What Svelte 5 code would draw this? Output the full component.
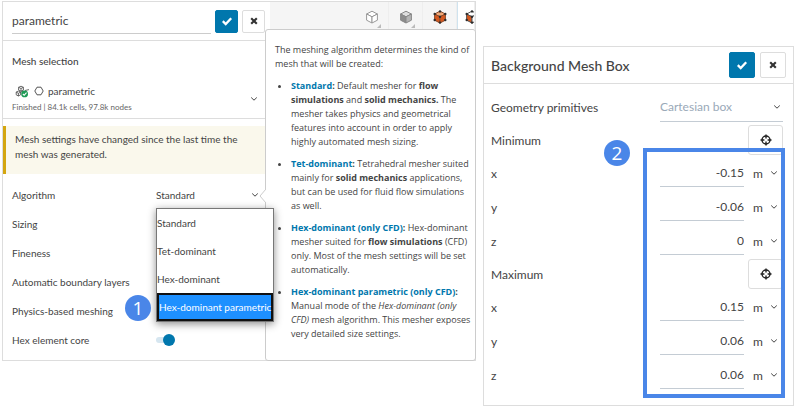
<script lang="ts">
  let meshName = $state('parametric');
  let algorithm = $state('Hex-dominant parametric');
  let hexCore = $state(true);

  const algorithms = ['Standard', 'Tet-dominant', 'Hex-dominant', 'Hex-dominant parametric'];
  const settings = ['Sizing', 'Fineness', 'Automatic boundary layers', 'Physics-based meshing'];

  let corners = $state([
    { name: 'Minimum', axes: [{ axis: 'x', value: '-0.15' }, { axis: 'y', value: '-0.06' }, { axis: 'z', value: '0' }] },
    { name: 'Maximum', axes: [{ axis: 'x', value: '0.15' }, { axis: 'y', value: '0.06' }, { axis: 'z', value: '0.06' }] }
  ]);
</script>

{#snippet check()}
  <svg viewBox="0 0 12 12" width="12" height="12"><path d="M1.8 6.2 4.7 9 10.2 3.3" fill="none" stroke="#fff" stroke-width="2.3" /></svg>
{/snippet}

{#snippet cross()}
  <svg viewBox="0 0 12 12" width="12" height="12"><path d="M3.2 3.2 8.8 8.8M8.8 3.2 3.2 8.8" fill="none" stroke="#333" stroke-width="2.1" /></svg>
{/snippet}

{#snippet chevron()}
  <svg class="chevron" viewBox="0 0 8 6" width="8" height="6"><path d="M1.2 1.5 4 4.2 6.8 1.5" fill="none" stroke="#444" /></svg>
{/snippet}

{#snippet cube(top: string, left: string, right: string, line: string, dots: boolean)}
  <svg viewBox="0 0 14 14" width="14" height="14">
    <path d="M7 1.2 12.4 4 7 6.8 1.6 4Z" fill={top} stroke={line} />
    <path d="M1.6 4 7 6.8V13L1.6 10.2Z" fill={left} stroke={line} />
    <path d="M12.4 4 7 6.8V13l5.4-2.8Z" fill={right} stroke={line} />
    {#if dots}
      {#each [[7, 1.4], [1.7, 4], [12.3, 4], [7, 6.8], [1.7, 10], [12.3, 10], [7, 12.6]] as [cx, cy]}
        <circle {cx} {cy} r="1.2" fill="#2b2b2b" />
      {/each}
    {/if}
  </svg>
{/snippet}

<main>
  <section class="workspace">
    <div class="side">
      <header class="head">
        <input class="name" aria-label="Mesh name" bind:value={meshName} />
        <button class="btn ok" aria-label="Apply">{@render check()}</button>
        <button class="btn" aria-label="Close">{@render cross()}</button>
      </header>

      <div class="selection">
        <h2>Mesh selection</h2>
        <div class="mesh">
          <div>
            <div class="mesh-name">
              <svg viewBox="0 0 15 13" width="15" height="13">
                <g fill="none" stroke="#444" stroke-width="0.8">
                  <path d="M6 1.2 8.4 2.3V5L6 6.2 3.6 5V2.3ZM3.6 2.3 6 3.5 8.4 2.3M6 3.5V6" />
                  <path d="M3.4 6 5.6 7.1V9.8L3.4 11 1.2 9.8V7.1ZM1.2 7.1 3.4 8.3 5.6 7.1M3.4 8.3V11" />
                  <path d="M5.6 7.1 8.5 6M10 5.5 14 4.6" />
                </g>
                <circle cx="9.6" cy="8.9" r="3.4" fill="#1f9a56" />
                <path d="M7.9 9 9.2 10.3 11.5 7.7" fill="none" stroke="#fff" stroke-width="1.1" />
              </svg>
              <svg viewBox="0 0 10 10" width="10" height="10"><path d="M3 1.2H7L9.2 5 7 8.8H3L.8 5Z" fill="none" stroke="#555" /></svg>
              <span>parametric</span>
            </div>
            <small>Finished | 84.1k cells, 97.8k nodes</small>
          </div>
          {@render chevron()}
        </div>
      </div>

      <p class="warning">Mesh settings have changed since the last time the mesh was generated.</p>

      <div class="rows">
        <div class="row">
          <label for="algorithm">Algorithm</label>
          <div class="pick">
            <select id="algorithm"><option>Standard</option></select>
            {@render chevron()}
            <div class="menu" role="listbox" aria-label="Algorithm">
              {#each algorithms as item}
                <button
                  role="option"
                  class:active={item === algorithm}
                  aria-selected={item === algorithm}
                  onclick={() => (algorithm = item)}>{item}</button>
              {/each}
              <span class="badge one">1</span>
            </div>
          </div>
        </div>
        {#each settings as item}
          <div class="row">{item}</div>
        {/each}
        <div class="row">
          <label for="core">Hex element core</label>
          <input id="core" class="toggle" type="checkbox" bind:checked={hexCore} />
        </div>
      </div>
    </div>

    <nav class="tools">
      <button class="tool more" aria-label="Wireframe">{@render cube('#fff', '#fff', '#fff', '#999', false)}</button>
      <button class="tool more" aria-label="Surfaces">{@render cube('#ddd', '#8c8c8c', '#b4b4b4', '#888', false)}</button>
      <button class="tool" aria-label="Surfaces with edges">{@render cube('#f0a878', '#d4581f', '#d4581f', '#8a4a2a', true)}</button>
      <button class="tool current" aria-label="Mesh edges">{@render cube('#fff', '#d4581f', '#fff', '#555', true)}</button>
    </nav>

    <aside class="help">
      <svg class="arrow" viewBox="0 0 7 14" width="7" height="14"><path d="M7 0 1 7 7 14" fill="#fff" stroke="#ccc" /></svg>
      <p>The meshing algorithm determines the kind of mesh that will be created:</p>
      <ul>
        <li><a href="#standard">Standard</a><b>:</b> Default mesher for <b>flow simulations</b> and <b>solid mechanics.</b> The mesher takes physics and geometrical features into account in order to apply highly automated mesh sizing.</li>
        <li><a href="#tet">Tet-dominant</a><b>:</b> Tetrahedral mesher suited mainly for <b>solid mechanics</b> applications, but can be used for fluid flow simulations as well.</li>
        <li><a href="#hex">Hex-dominant (only CFD)</a><b>:</b> Hex-dominant mesher suited for <b>flow simulations</b> (CFD) only. Most of the mesh settings will be set automatically.</li>
        <li><a href="#hex-parametric">Hex-dominant parametric (only CFD)</a><b>:</b> Manual mode of the <i>Hex-dominant (only CFD)</i> mesh algorithm. This mesher exposes very detailed size settings.</li>
      </ul>
    </aside>
  </section>

  <section class="box">
    <header class="box-head">
      <h1>Background Mesh Box</h1>
      <button class="btn ok" aria-label="Apply">{@render check()}</button>
      <button class="btn" aria-label="Close">{@render cross()}</button>
    </header>
    <div class="box-body">
      <div class="line">
        <label for="primitive">Geometry primitives</label>
        <div class="primitive">
          <select id="primitive"><option>Cartesian box</option></select>
          {@render chevron()}
        </div>
      </div>
      {#each corners as corner}
        <div class="line corner">
          <span>{corner.name}</span>
          <button class="target" aria-label="Pick {corner.name}">
            <svg viewBox="0 0 12 12" width="12" height="12">
              <circle cx="6" cy="6" r="4" fill="none" stroke="#222" stroke-width="1.4" />
              <path d="M6 .5V4.4M6 7.6V11.5M.5 6H4.4M7.6 6H11.5" stroke="#222" stroke-width="1.4" />
            </svg>
          </button>
        </div>
        {#each corner.axes as row}
          <div class="line">
            <label for="{corner.name}-{row.axis}">{row.axis}</label>
            <input id="{corner.name}-{row.axis}" bind:value={row.value} />
            <div class="unit">
              <select aria-label="{corner.name} {row.axis} unit"><option>m</option></select>
              {@render chevron()}
            </div>
          </div>
        {/each}
      {/each}
      <div class="marker"><span class="badge two">2</span></div>
    </div>
  </section>
</main>

<style>
  :global(body) {
    background: #fff;
  }
  main {
    display: grid;
    grid-template-columns: 474fr 311fr;
    gap: 7px;
    align-items: start;
    padding: 1px 0 0 2px;
    font-family: Lato, "Liberation Sans", sans-serif;
    font-size: 10px;
    color: #444;
  }
  * {
    box-sizing: border-box;
  }
  h1, h2, p, ul {
    margin: 0;
  }
  button, input, select {
    margin: 0;
    padding: 0;
    border: 0;
    border-radius: 0;
    background: none;
    font: inherit;
    color: inherit;
    appearance: none;
  }
  svg {
    display: block;
    flex: none;
  }

  .workspace {
    position: relative;
    display: grid;
    grid-template-columns: 267px 1fr;
    border: 1px solid #ddd;
  }
  .head {
    display: flex;
    align-items: center;
    gap: 4px;
    height: 39px;
    padding: 0 5px 0 9px;
    border-bottom: 1px solid #ddd;
  }
  .name {
    flex: 1;
    min-width: 0;
    height: 26px;
    border-bottom: 1px solid #ccc;
    font-size: 12px;
  }
  .btn {
    display: grid;
    place-items: center;
    width: 23px;
    height: 23px;
    border: 1px solid #ddd;
    border-radius: 2px;
  }
  .ok {
    border-color: #0077ad;
    background: #0077ad;
  }
  .selection {
    padding: 12px 9px 0;
    height: 78px;
    border-bottom: 1px solid #ddd;
  }
  h2 {
    font-size: 10px;
    line-height: 16px;
    font-weight: 500;
  }
  .mesh {
    display: flex;
    justify-content: space-between;
    align-items: center;
    margin-top: 14px;
    line-height: 16px;
  }
  .mesh-name {
    display: flex;
    align-items: center;
    gap: 4px;
    padding-left: 3px;
  }
  small {
    display: block;
    font-size: 8px;
    color: #666;
  }
  .mesh > .chevron {
    margin-right: 3px;
  }
  .warning {
    margin-top: 7px;
    height: 48px;
    padding: 6px 24px 0 9px;
    border-left: 3px solid #d4a60f;
    background: #faf8ec;
    line-height: 15px;
  }
  .rows {
    padding: 6px 9px;
  }
  .row {
    display: flex;
    align-items: center;
    height: 29px;
  }
  .row label {
    flex: 0 0 144px;
  }
  .pick {
    position: relative;
    display: flex;
    align-items: center;
    flex: 1;
    padding-right: 2px;
  }
  .pick select {
    flex: 1;
  }
  .menu {
    position: absolute;
    z-index: 2;
    top: 19px;
    left: 0;
    width: 118px;
    border: 1px solid #777;
    background: #fff;
    box-shadow: 0 2px 8px rgba(0, 0, 0, 0.45);
  }
  .menu button {
    display: block;
    width: 100%;
    height: 28px;
    text-align: left;
    white-space: nowrap;
  }
  .menu .active {
    border: 2px solid #111;
    background: #1e90ff;
    color: #fff;
  }
  .badge {
    position: absolute;
    width: 26px;
    height: 26px;
    border-radius: 50%;
    background: #4a86e8;
    color: #fff;
    font-family: "Open Sans", sans-serif;
    font-size: 19px;
    line-height: 26px;
    text-align: center;
  }
  .one {
    bottom: 0;
    left: -32px;
  }
  .toggle {
    position: relative;
    width: 18px;
    height: 6px;
    border-radius: 3px;
    background: #d6e6f0;
  }
  .toggle::after {
    content: "";
    position: absolute;
    top: -3px;
    left: 0;
    width: 12px;
    height: 12px;
    border-radius: 50%;
    background: #999;
  }
  .toggle:checked::after {
    left: 7px;
    background: #0077ad;
  }

  .tools {
    display: flex;
    justify-content: flex-end;
    height: 27px;
    overflow: hidden;
    background: #f5f5f5;
  }
  .tool {
    position: relative;
    display: grid;
    place-items: center;
    width: 34px;
    flex: none;
    padding-top: 3px;
    border-right: 1px solid #eee;
  }
  .more::after {
    content: "";
    position: absolute;
    right: 7px;
    bottom: 1px;
    border: 2px solid #bbb;
    border-top-color: transparent;
    border-left-color: transparent;
  }
  .current {
    width: 18px;
    overflow: hidden;
    justify-content: start;
    padding-left: 7px;
    border-left: 1px solid #cfe3ef;
    background: #fff;
  }

  .help {
    position: absolute;
    top: 27px;
    right: -1px;
    bottom: -1px;
    left: 262px;
    padding: 13px 1px 0 9px;
    border: 1px solid #ccc;
    border-radius: 3px;
    background: #fff;
    font-family: "Open Sans", "Noto Sans", sans-serif;
    font-size: 9px;
    line-height: 14px;
  }
  .help ul {
    padding-left: 16px;
  }
  .help li {
    margin-top: 8px;
  }
  .help a {
    color: #0077ad;
    font-weight: 700;
    text-decoration: none;
  }
  .arrow {
    position: absolute;
    left: -7px;
    top: 159px;
  }

  .box {
    margin-top: 45px;
    border: 1px solid #ddd;
  }
  .box-head {
    display: flex;
    align-items: center;
    gap: 5px;
    height: 37px;
    padding: 0 7px;
    border-bottom: 1px solid #ddd;
  }
  h1 {
    flex: 1;
    font-size: 14px;
    font-weight: 500;
  }
  .box-head .btn {
    width: 26px;
    height: 26px;
  }
  .box-body {
    position: relative;
    padding: 6px 10px 13px 7px;
    font-size: 12px;
  }
  .line {
    display: flex;
    align-items: center;
    height: 34px;
  }
  .line > :first-child {
    flex: 1;
  }
  .corner {
    height: 32px;
  }
  .primitive {
    display: flex;
    align-items: center;
    width: 123px;
    height: 30px;
    padding-right: 2px;
    border-bottom: 1px solid #c4ccd4;
    color: #9aa9b8;
  }
  .primitive select {
    flex: 1;
  }
  .target {
    display: grid;
    place-items: center;
    width: 35px;
    height: 30px;
    border: 1px solid #ddd;
    border-radius: 3px;
  }
  .line input {
    width: 84px;
    height: 28px;
    border-bottom: 1px solid #c4ccd4;
    text-align: right;
  }
  .unit {
    display: flex;
    align-items: center;
    width: 39px;
    padding: 0 5px 0 9px;
  }
  .unit select {
    flex: 1;
    min-width: 0;
  }
  .marker {
    position: absolute;
    top: 64px;
    right: 8px;
    bottom: 7px;
    width: 142px;
    border: 4px solid #4a86e8;
    pointer-events: none;
  }
  .two {
    top: -12px;
    left: -43px;
  }
</style>
